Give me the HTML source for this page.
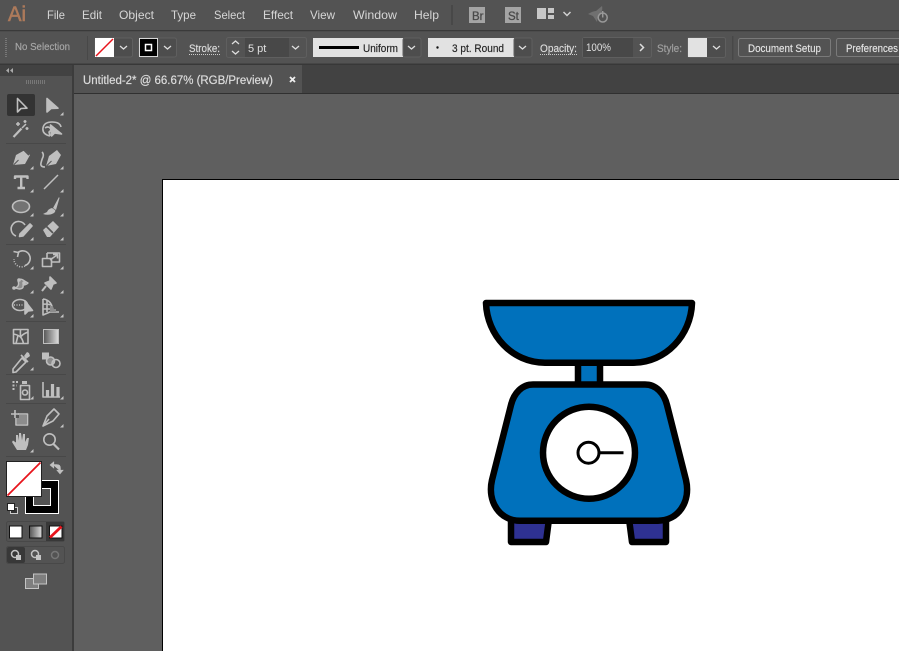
<!DOCTYPE html>
<html><head><meta charset="utf-8"><style>
html,body{margin:0;padding:0;width:899px;height:651px;overflow:hidden;background:#5f5f5f}
svg{display:block}
text{font-family:"Liberation Sans",sans-serif}
</style></head><body>
<svg width="899" height="651" viewBox="0 0 899 651" xmlns="http://www.w3.org/2000/svg">
<rect width="899" height="651" fill="#5f5f5f"/>
<!-- menu bar -->
<rect width="899" height="30" fill="#535353"/>
<rect y="30" width="899" height="1.500" fill="#3a3a3a"/>
<text x="8" y="21" font-size="21" fill="#ad7a5b" stroke="#ad7a5b" stroke-width=".6" textLength="18" lengthAdjust="spacingAndGlyphs">Ai</text>
<g font-size="12" fill="#d6d6d6">
<text x="47" y="19" textLength="18" lengthAdjust="spacingAndGlyphs">File</text>
<text x="82" y="19" textLength="20" lengthAdjust="spacingAndGlyphs">Edit</text>
<text x="119" y="19" textLength="35" lengthAdjust="spacingAndGlyphs">Object</text>
<text x="171" y="19" textLength="25" lengthAdjust="spacingAndGlyphs">Type</text>
<text x="214" y="19" textLength="31" lengthAdjust="spacingAndGlyphs">Select</text>
<text x="263" y="19" textLength="30" lengthAdjust="spacingAndGlyphs">Effect</text>
<text x="310" y="19" textLength="25" lengthAdjust="spacingAndGlyphs">View</text>
<text x="353" y="19" textLength="44" lengthAdjust="spacingAndGlyphs">Window</text>
<text x="414" y="19" textLength="25" lengthAdjust="spacingAndGlyphs">Help</text>
</g>
<rect x="451" y="5" width="2" height="20" fill="#484848"/>
<rect x="469" y="7" width="16" height="16" fill="#a4a4a4"/><text x="472" y="20" font-size="11.500" fill="#4a4a4a" stroke="#4a4a4a" stroke-width=".3">Br</text>
<rect x="505" y="7" width="16" height="16" fill="#a4a4a4"/><text x="508" y="20" font-size="11.500" fill="#4a4a4a" stroke="#4a4a4a" stroke-width=".3">St</text>
<path d="M537 8h9v11h-9zM548 8h6v5h-6zM548 15h6v4h-6z" fill="#c8c8c8"/>
<path d="M563.500 12l3.500 3.500 3.500-3.500" fill="none" stroke="#d0d0d0" stroke-width="1.500"/>
<path d="M588 14q5-3 8-3l6-5q1 3-1 7l-3 2-1 7-4-6z" fill="#707070"/>
<circle cx="602.700" cy="17.500" r="4.500" fill="#535353" stroke="#999" stroke-width="1.500"/><path d="M602.700 11v6.500" stroke="#999" stroke-width="1.500"/>
<!-- control bar -->
<rect y="32" width="899" height="32" fill="#535353"/>
<rect y="63.500" width="899" height="1.500" fill="#383838"/>
<path d="M6 38v19" stroke="#777" stroke-width="2" stroke-dasharray="1 1"/>
<text x="15" y="50" font-size="10.500" fill="#a8a8a8" stroke="#a8a8a8" stroke-width=".15" textLength="55" lengthAdjust="spacingAndGlyphs">No Selection</text>
<rect x="87" y="36" width="1" height="24" fill="#484848"/>
<rect x="95" y="38" width="37.500" height="19" rx="2" fill="#4d4d4d" stroke="#5f5f5f"/>
<rect x="95" y="38" width="19" height="19" fill="#fff"/><path d="M96 56L113 39" stroke="#e8141c" stroke-width="1.500"/>
<path d="M120 46l3.500 3 3.500-3" fill="none" stroke="#ddd" stroke-width="1.300"/>
<rect x="139" y="38" width="37.500" height="19" rx="2" fill="#4d4d4d" stroke="#5f5f5f"/>
<rect x="139.500" y="38.500" width="18" height="18" fill="#000" stroke="#fff" stroke-width=".8"/><rect x="145.500" y="44.500" width="6" height="6" fill="#000" stroke="#fff" stroke-width="1.500"/>
<path d="M164 46l3.500 3 3.500-3" fill="none" stroke="#ddd" stroke-width="1.300"/>
<text x="189" y="52" font-size="11" fill="#dcdcdc" stroke="#dcdcdc" stroke-width=".15" textLength="31" lengthAdjust="spacingAndGlyphs">Stroke:</text>
<path d="M189 54.500h31" stroke="#ccc" stroke-dasharray="1 1"/>
<rect x="226.500" y="37.500" width="80" height="20" rx="2" fill="#535353" stroke="#5f5f5f"/>
<rect x="245" y="38" width="44" height="19" fill="#484848"/>
<path d="M232 44l3.500-3 3.500 3M232 51l3.500 3 3.500-3M292 46l3.500 3 3.500-3" fill="none" stroke="#ddd" stroke-width="1.300"/>
<text x="248" y="52" font-size="11" fill="#e0e0e0">5 pt</text>
<rect x="313" y="38" width="90" height="19" fill="#e2e2e2"/><rect x="319" y="46" width="40" height="3" fill="#000"/>
<text x="363" y="52" font-size="11" fill="#222" stroke="#222" stroke-width=".15" textLength="35" lengthAdjust="spacingAndGlyphs">Uniform</text>
<rect x="403" y="38" width="18" height="19" rx="2" fill="#4d4d4d" stroke="#5f5f5f"/>
<path d="M408 46l3.500 3 3.500-3" fill="none" stroke="#ddd" stroke-width="1.300"/>
<rect x="428" y="38" width="86" height="19" fill="#e2e2e2"/><circle cx="437.500" cy="47.500" r="1.200" fill="#111"/>
<text x="452" y="52" font-size="11" fill="#222" stroke="#222" stroke-width=".15" textLength="52" lengthAdjust="spacingAndGlyphs">3 pt. Round</text>
<rect x="514" y="38" width="18" height="19" rx="2" fill="#4d4d4d" stroke="#5f5f5f"/>
<path d="M519 46l3.500 3 3.500-3" fill="none" stroke="#ddd" stroke-width="1.300"/>
<text x="540" y="52" font-size="11" fill="#dcdcdc" stroke="#dcdcdc" stroke-width=".15" textLength="37" lengthAdjust="spacingAndGlyphs">Opacity:</text>
<path d="M540 54.500h37" stroke="#ccc" stroke-dasharray="1 1"/>
<rect x="582.500" y="37.500" width="69" height="20" rx="2" fill="#535353" stroke="#5f5f5f"/>
<rect x="583" y="38" width="50" height="19" fill="#484848"/>
<text x="586" y="51" font-size="11" fill="#e0e0e0" textLength="25" lengthAdjust="spacingAndGlyphs">100%</text>
<path d="M640 44l3.500 3.500-3.500 3.500" fill="none" stroke="#ddd" stroke-width="1.500"/>
<text x="657" y="52" font-size="11" fill="#a0a0a0" stroke="#a0a0a0" stroke-width=".15" textLength="25" lengthAdjust="spacingAndGlyphs">Style:</text>
<rect x="687.500" y="37.500" width="38" height="20" rx="2" fill="#4d4d4d" stroke="#5f5f5f"/>
<rect x="688" y="38" width="19" height="19" fill="#e2e2e2"/>
<path d="M713 46l3.500 3 3.500-3" fill="none" stroke="#ddd" stroke-width="1.300"/>
<rect x="732" y="36" width="1.500" height="24" fill="#484848"/>
<rect x="738.500" y="38.500" width="92" height="18" rx="2" fill="#535353" stroke="#7a7a7a"/>
<text x="748" y="52" font-size="11" fill="#e4e4e4" stroke="#e4e4e4" stroke-width=".15" textLength="73" lengthAdjust="spacingAndGlyphs">Document Setup</text>
<rect x="836.500" y="38.500" width="80" height="18" rx="2" fill="#535353" stroke="#7a7a7a"/>
<text x="846" y="52" font-size="11" fill="#e4e4e4" stroke="#e4e4e4" stroke-width=".15" textLength="52" lengthAdjust="spacingAndGlyphs">Preferences</text>
<!-- tab row -->
<rect y="65" width="899" height="28" fill="#424242"/>
<rect y="93" width="899" height="1" fill="#303030"/>
<rect x="74" y="65" width="228" height="28" fill="#535353"/>
<text x="83" y="84" font-size="11.500" fill="#dcdcdc" stroke="#dcdcdc" stroke-width=".2" textLength="190" lengthAdjust="spacingAndGlyphs">Untitled-2* @ 66.67% (RGB/Preview)</text>
<path d="M290 77l5 5M295 77l-5 5" stroke="#eee" stroke-width="1.800"/>
<!-- left panel -->
<rect x="0" y="65" width="72" height="586" fill="#535353"/>
<rect x="0" y="65" width="72" height="11" fill="#424242"/>
<rect x="72" y="65" width="2" height="586" fill="#3c3c3c"/>
<path d="M9 68l-3 2.500 3 2.500zM13 68l-3 2.500 3 2.500z" fill="#aaa"/>
<path d="M26 82h19" stroke="#777" stroke-width="4" stroke-dasharray="1 1"/>
<rect x="7" y="94" width="28" height="22" rx="2" fill="#333"/>
<g fill="none" stroke="#bfbfbf" stroke-width="1.600" stroke-linejoin="round">
<!-- selection -->
<path d="M17.500 98.500v13.500l3.500-3.500 6-.3z"/>
<path fill="#bfbfbf" d="M47 98.500v13.500l4-3.500 7-.3z"/>
<!-- wand -->
<path stroke-width="2.200" d="M13.500 137l8-8.500"/><path stroke-width="1.500" d="M22 128l4-4M18 122v4M16 124h4M27 127v3M25.500 128.500h3M25 120v3M23.500 121.500h3"/>
<!-- lasso -->
<path d="M50 136q-8-2-7-8t9-6q8 0 9 5"/><path d="M45 128q3-2 5 0t-1 4l1 4"/>
<path fill="#bfbfbf" d="M50.500 125l1 11 3-3 7 1z"/>
<!-- pen -->
<path fill="#bfbfbf" stroke="none" d="M13 165l3-10 9-5 5 5-5 9z"/><path d="M13.500 165l5-5" stroke="#535353" stroke-width="1"/><path d="M24 150l5 5" stroke="#535353"/>
<path fill="#bfbfbf" stroke="none" d="M46 166l3-10 8-6 4 5-5 9z"/><path d="M46.500 166l5-5" stroke="#535353" stroke-width="1"/>
<path d="M45 167q-5 0-4-4t2-6q1-3-1-5"/>
<!-- type -->
<path stroke-width="2.400" d="M15 179v-2.500h12.500v2.500M21.200 176.500v11.500M17.500 188h7.500"/>
<path stroke-width="1.500" d="M44 189l14-14"/>
<!-- ellipse -->
<ellipse cx="21" cy="206.500" rx="8.500" ry="6" fill="#737373"/>
<!-- brush -->
<path fill="#bfbfbf" stroke="none" d="M59 197l-6 11 3 2 3.500-12zM52 208q-4 1-5 4l-4 2q6 2 11-1 2-2 1-3z"/>
<!-- shaper -->
<path d="M16 236a7.500 7.500 0 1 1 9-11"/>
<path fill="#bfbfbf" d="M20 234l10-10 2 2-9 10-3.500.5z"/>
<!-- eraser -->
<path fill="#bfbfbf" stroke="none" d="M43 230l10-9 6 6-9 10-3 0z"/><path d="M46 226l7 7" stroke="#535353"/>
<!-- rotate -->
<path d="M18 252.500a7.500 7.500 0 1 1 7 13"/><path stroke-dasharray="1 1.500" d="M25 266a7.500 7.500 0 0 1-11-7"/><path d="M13.500 251.500l5 1-1 4.500"/>
<!-- scale -->
<path d="M42.500 258.500h9v8h-9zM47 253h12.500v9H51.500M47 258.500V253M50 260l7-5M53 254.500h4.500v4"/>
<!-- warp -->
<path fill="#8c8c8c" stroke-width="1.400" d="M15 288q5-2 3-7 2-3 5-1t5 3q-2 2-5 2 1 4-4 4z"/>
<circle cx="14" cy="288" r="1.800" fill="#bfbfbf" stroke="none"/><circle cx="19" cy="280" r="1.800" fill="#bfbfbf" stroke="none"/><circle cx="24" cy="283" r="1.800" fill="#bfbfbf" stroke="none"/>
<!-- pin -->
<path fill="#bfbfbf" d="M50 277l6 6-3 1-2 5-6-6 5-2z"/><path stroke-width="2" d="M46 286l-4 5"/>
<!-- shape builder -->
<ellipse cx="20" cy="305" rx="7.500" ry="5.500"/><path stroke-dasharray="1 1.500" d="M14 305h10"/>
<path fill="#bfbfbf" d="M25 301v13l3-3 4.500-.5z"/>
<!-- perspective -->
<path d="M43 299v16l7-3h9M43 299q9 1 10 12M43 304q5 0 9 1M43 309l7 0M47 300v12"/>
<path stroke="none" fill="#8c8c8c" d="M50 306h3v3h3v3h-6z"/>
<!-- mesh -->
<path d="M13.500 329.500h14.500v14h-14.500zM13.500 334q5 1 7 3t3 6.500M28 332q-5 2-6.500 4t-1-6.500M18 335.500q-1 4-2 8"/>
</g>
<defs><linearGradient id="g"><stop offset="0" stop-color="#555"/><stop offset="1" stop-color="#ddd"/></linearGradient></defs>
<rect x="43.500" y="329.500" width="15" height="14" fill="url(#g)" stroke="#bfbfbf"/>
<g fill="none" stroke="#bfbfbf" stroke-width="1.600" stroke-linejoin="round">
<!-- eyedropper -->
<path d="M13 369l9-11 4 4-10 10-3 .5zM21 355l7 7"/><path fill="#bfbfbf" stroke="none" d="M24 356l3-4 2 1 1 3-4 3z"/>
<!-- blend -->
<rect x="42" y="352.500" width="7" height="7" fill="#bfbfbf" stroke="none"/>
<circle cx="50.500" cy="361" r="4" fill="#8c8c8c"/><circle cx="56" cy="363.500" r="4"/>
<!-- symbol sprayer -->
<path fill="#bfbfbf" stroke="none" d="M22 381h5v3h-5z"/><rect x="20.500" y="385.500" width="9" height="14"/><circle cx="25" cy="392.500" r="2.500"/>
<path stroke-width="2" stroke-dasharray="2 1.500" d="M12.500 382h6M12.500 385.500h4M12.500 389h2"/>
<!-- graph -->
<path d="M43 382v15h17"/><path stroke-width="3.200" d="M47.500 397v-7M52.500 397v-13M58 397v-10"/>
<!-- artboard -->
<path d="M11 414h8M15 410v8"/>
<path d="M18 414h9.500v11h-11.500v-7"/><path stroke="none" fill="#8c8c8c" d="M19 415h8v9h-10v-6h2z"/>
<!-- slice -->
<path d="M43 426l4-10 7-7 5 5-6 7zM43 426l6-7"/>
<!-- hand -->
<path fill="#bfbfbf" stroke="none" d="M17 450l-5-8 1-1.500 3 2 0-7.500 2 0 1 5.500 0-7.500 2 0 1 7.500 1-6.500 2 0 0 8 2-4 2 0-1 7-2 5-8 0z"/>
<!-- zoom -->
<circle cx="49.500" cy="439.500" r="5.700"/><path stroke-width="2.200" d="M53.500 444l5.500 5.500"/>
</g>
<!-- corner triangles -->
<path fill="#c4c4c4" d="M63.500 112v3.500h-3.500zM33.500 166v3.500h-3.500zM63.500 166v3.500h-3.500zM33.500 189v3.500h-3.500zM63.500 189v3.500h-3.500zM33.500 213v3.500h-3.500zM63.500 213v3.500h-3.500zM33.500 237v3.500h-3.500zM63.500 237v3.500h-3.500zM33.500 266v3.500h-3.500zM63.500 266v3.500h-3.500zM33.500 290v3.500h-3.500zM63.500 290v3.500h-3.500zM33.500 314v3.500h-3.500zM63.500 314v3.500h-3.500zM33.500 367v3.500h-3.500zM33.500 396v3.500h-3.500zM63.500 396v3.500h-3.500zM63.500 424v3.500h-3.500zM33.500 449v3.500h-3.500z"/>
<!-- dividers -->
<path d="M6 143.500h60M6 244.500h60M6 321.500h60M6 374.500h60M6 403.500h60M6 456.500h60" stroke="#484848"/>
<!-- fill & stroke -->
<rect x="25.500" y="480.500" width="33" height="33" fill="#000" stroke="#fff"/>
<rect x="33.500" y="488.500" width="17" height="17" fill="#535353" stroke="#fff"/>
<rect x="6.500" y="461.500" width="35" height="35" fill="#fff" stroke="#222"/>
<path d="M7.500 495.500L40.500 462.500" stroke="#e8141c" stroke-width="1.800"/>
<path d="M53 465h4q3 0 3 3v3M53.500 462.500l-3 2.500 3 2.500zM57.500 470.500l2.500 3 2.500-3z" fill="#bfbfbf" stroke="#bfbfbf" stroke-width="1.200"/>
<path d="M54 465h3q3 0 3 3v2" fill="none" stroke="#bfbfbf" stroke-width="1.300"/>
<rect x="10.500" y="507.500" width="7" height="6" fill="#333" stroke="#ccc"/>
<rect x="7.500" y="503.500" width="7" height="7" fill="#fff" stroke="#222"/>
<!-- mode buttons -->
<rect x="6.500" y="521.500" width="58" height="20" rx="2" fill="#535353" stroke="#484848"/>
<rect x="46" y="522" width="18" height="19" fill="#383838"/>
<rect x="9.500" y="526" width="12.500" height="12" fill="#fff" stroke="#111"/>
<rect x="29.500" y="526" width="12.500" height="12" fill="url(#g)" stroke="#111"/>
<rect x="49.500" y="526" width="12.500" height="12" fill="#fff" stroke="#111"/><path d="M50 537.500l11.500-11" stroke="#e8141c" stroke-width="2.800"/>
<rect x="6.500" y="546.500" width="58" height="17" rx="2" fill="#535353" stroke="#484848"/>
<rect x="7" y="547" width="18" height="16" rx="2" fill="#383838"/>
<circle cx="15" cy="554" r="3.500" fill="none" stroke="#c4c4c4" stroke-width="1.500"/><rect x="16" y="555" width="5" height="5" fill="#c4c4c4"/>
<circle cx="35" cy="554" r="3.500" fill="none" stroke="#c4c4c4" stroke-width="1.500"/><rect x="36" y="555" width="5" height="5" fill="#c4c4c4"/>
<circle cx="55" cy="555" r="3.500" fill="none" stroke="#777" stroke-width="1.500"/>
<rect x="25.500" y="578.500" width="13" height="10" fill="#7f7f7f" stroke="#c4c4c4"/>
<rect x="33.500" y="574" width="13" height="10" fill="#7f7f7f" stroke="#c4c4c4"/>
<!-- artboard -->
<rect x="162.500" y="179.500" width="740" height="480" fill="#fff" stroke="#000"/>
<!-- scale -->
<g stroke="#000" stroke-width="6.500" stroke-linejoin="round" fill="#0071bc">
<path fill="#2e3192" d="M511 519V542H546L549 519zM629 519L632 542H666V519z"/>
<rect x="578" y="360" width="22" height="26"/>
<path d="M486 303H692C691 335 666 362.700 633 362.700H545C512 362.700 487 335 486 303z"/>
<path d="M533 384.500H645C656 384.500 664 393 667 405L686 480C691 502 678 520.700 658 520.700H520C500 520.700 487 502 492 480L511 405C514 393 522 384.500 533 384.500z"/>
<circle cx="589" cy="452.700" r="46" fill="#fff"/>
</g>
<circle cx="588.500" cy="452.700" r="10.500" fill="#fff" stroke="#000" stroke-width="3"/>
<path d="M599 452.700H623.500" stroke="#000" stroke-width="3"/>
</svg>
</body></html>
